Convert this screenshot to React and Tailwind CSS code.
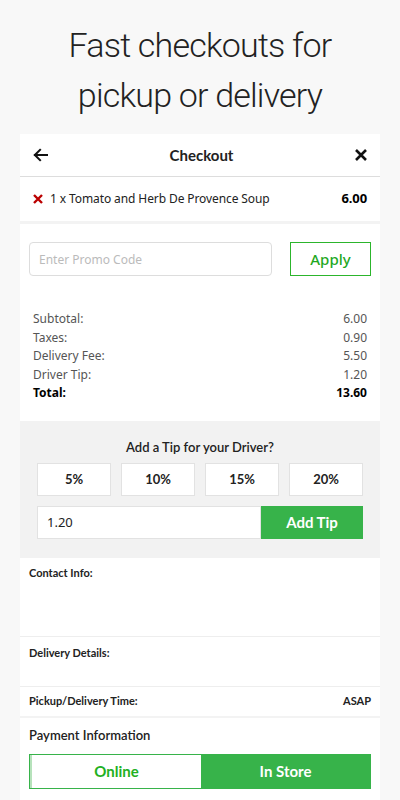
import React from 'react';

const body = { fontFamily: '"Noto Sans", "Open Sans", sans-serif' };
const head = { fontFamily: 'Lato, "Noto Sans", sans-serif' };

function Row({ label, value, bold }) {
  return (
    <div className={`flex justify-between leading-[18.6px] ${bold ? 'font-bold text-black' : 'text-[#555]'}`}>
      <span>{label}</span>
      <span>{value}</span>
    </div>
  );
}

export default function App() {
  return (
    <div className="min-h-screen w-[400px] bg-[#f8f8f8] overflow-hidden" style={body}>
      {/* Hero */}
      <h1
        className="pt-[20px] pb-[14px] text-center text-[34px] leading-[50px] font-light text-[#222] tracking-[-0.8px]"
        style={{ fontFamily: 'Roboto, Lato, sans-serif' }}
      >
        Fast checkouts for
        <br />
        pickup or delivery
      </h1>

      <div className="mx-[20px] bg-white">
        {/* Header */}
        <div className="h-[43px] flex items-center justify-between px-[13px] border-b border-[#ddd]">
          <svg width="15" height="14" viewBox="0 0 16 14" fill="none" stroke="#111" strokeWidth="2.2" strokeLinecap="square">
            <path d="M15 7H2M7.5 1.5L2 7l5.5 5.5" />
          </svg>
          <span className="text-[15px] font-bold text-[#222]" style={head}>Checkout</span>
          <svg width="12" height="12" viewBox="0 0 12 12" stroke="#111" strokeWidth="2.6">
            <path d="M1 1l10 10M11 1L1 11" />
          </svg>
        </div>

        {/* Item */}
        <div className="h-[47px] flex items-center justify-between px-[13px] text-[12px] tracking-[-0.1px] border-b-[3px] border-[#f3f3f3]">
          <div className="flex items-center gap-[7px] text-[#222]">
            <svg width="10" height="10" viewBox="0 0 10 10" stroke="#b00" strokeWidth="2.4">
              <path d="M1 1l8 8M9 1L1 9" />
            </svg>
            <span>1 x Tomato and Herb De Provence Soup</span>
          </div>
          <span className="font-bold text-black text-[13px]">6.00</span>
        </div>

        {/* Promo */}
        <div className="flex items-center gap-[18px] px-[9px] pt-[18px]">
          <input
            className="h-[34px] flex-1 rounded-[4px] border border-[#ddd] px-[9px] text-[12px] outline-none placeholder:text-[#bbb]"
            placeholder="Enter Promo Code"
          />
          <button className="h-[34px] w-[81px] border border-[#2cb52c] text-[15px] text-[#1fa81f] font-medium">
            Apply
          </button>
        </div>

        {/* Totals */}
        <div className="px-[13px] pt-[34px] pb-[18px] text-[12px]">
          <Row label="Subtotal:" value="6.00" />
          <Row label="Taxes:" value="0.90" />
          <Row label="Delivery Fee:" value="5.50" />
          <Row label="Driver Tip:" value="1.20" />
          <Row label="Total:" value="13.60" bold />
        </div>

        {/* Tip */}
        <div className="bg-[#f2f2f2] px-[17px] pt-[16px] pb-[19px]">
          <div className="text-center text-[13px] font-semibold text-[#222] leading-[20px]" style={head}>
            Add a Tip for your Driver?
          </div>
          <div className="mt-[6px] grid grid-cols-4 gap-[10px]">
            {['5%', '10%', '15%', '20%'].map((t) => (
              <button
                key={t}
                className="h-[33px] bg-white border border-[#e2e2e2] text-[13px] font-bold text-[#222]"
                style={head}
              >
                {t}
              </button>
            ))}
          </div>
          <div className="mt-[10px] flex h-[33px]">
            <input
              className="flex-1 bg-white border border-[#e2e2e2] px-[9px] text-[13px] text-[#222] outline-none"
              defaultValue="1.20"
            />
            <button className="w-[102px] bg-[#37b34a] text-white text-[15px] font-bold" style={head}>
              Add Tip
            </button>
          </div>
        </div>

        {/* Contact */}
        <div className="h-[79px] px-[9px] pt-[7px] border-b border-[#eee] text-[11px] leading-[16px] font-bold text-[#222]" style={head}>
          Contact Info:
        </div>
        <div className="h-[50px] px-[9px] pt-[8px] border-b border-[#eee] text-[11px] leading-[16px] font-bold text-[#222]" style={head}>
          Delivery Details:
        </div>
        <div className="h-[31px] px-[9px] flex items-center justify-between border-b-[2px] border-[#f3f3f3] text-[11px] font-bold text-[#222]" style={head}>
          <span>Pickup/Delivery Time:</span>
          <span>ASAP</span>
        </div>

        {/* Payment */}
        <div className="px-[9px] pt-[7px] pb-[12px]">
          <div className="text-[13px] font-semibold text-[#222] leading-[20px]" style={head}>Payment Information</div>
          <div className="mt-[9px] flex h-[35px] border border-[#37b34a]">
            <button className="flex-1 bg-white text-[15px] font-bold text-[#22b022] border-l-[2px] border-[#b6e2bb]" style={head}>
              Online
            </button>
            <button className="flex-1 bg-[#37b34a] text-[15px] font-bold text-white" style={head}>
              In Store
            </button>
          </div>
        </div>
      </div>
    </div>
  );
}
